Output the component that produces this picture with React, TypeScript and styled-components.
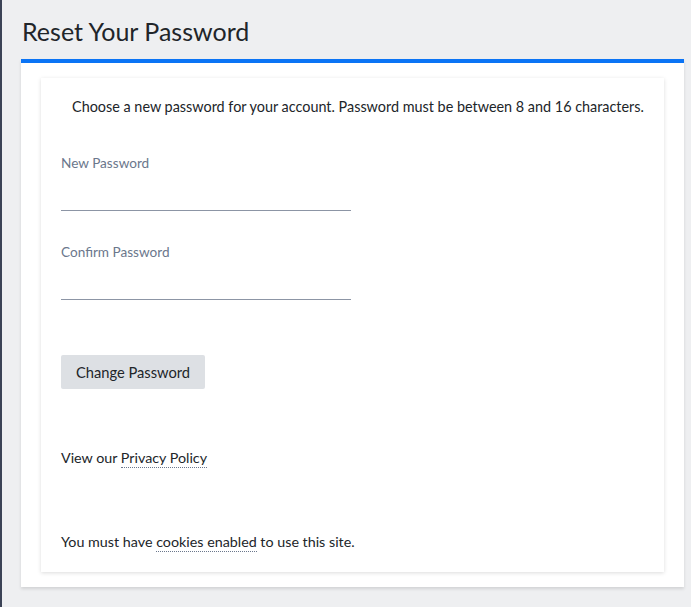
import styled, { createGlobalStyle } from 'styled-components';

const GlobalStyle = createGlobalStyle`
  body {
    margin: 0;
    background: #eeeff1;
    font-family: Lato, "Noto Sans", Arial, sans-serif;
    color: #212529;
  }
`;

const Page = styled.div`
  min-height: 100vh;
  box-sizing: border-box;
  border-left: 2px solid #3b4356;
  padding: 0 7px 20px 19px;
`;

const Title = styled.h1`
  margin: 0;
  padding: 16px 0 0 1px;
  height: 43px;
  font-size: 25px;
  line-height: 30px;
  font-weight: 400;
  color: #212529;
`;

const Panel = styled.section`
  background: #fff;
  border-top: 4px solid #0b74f5;
  padding: 15px 20px;
  box-shadow: 0 2px 3px rgba(0, 0, 0, 0.12);
`;

const Card = styled.div`
  background: #fff;
  padding: 19px 20px 20px;
  box-shadow: 0 1px 4px rgba(0, 0, 0, 0.14);
`;

const Intro = styled.p`
  margin: 0 -20px 0 -9px;
  font-size: 14.4px;
  line-height: 20px;
  text-align: center;
  white-space: nowrap;
`;

const Field = styled.div<{ $gap: number }>`
  margin-top: ${(p) => p.$gap}px;
  width: 290px;
`;

const Label = styled.label`
  display: block;
  font-size: 13.6px;
  line-height: 20px;
  color: #6b778c;
`;

const Input = styled.input`
  display: block;
  width: 100%;
  height: 38px;
  box-sizing: border-box;
  border: none;
  border-bottom: 1px solid #8c95a5;
  background: transparent;
  outline: none;
  font-size: 14px;
`;

const Button = styled.button`
  margin-top: 55px;
  width: 144px;
  height: 34px;
  border: none;
  border-radius: 2px;
  background: #dde0e4;
  color: #212529;
  font-family: inherit;
  font-size: 14.7px;
  cursor: pointer;
`;

const Note = styled.p<{ $gap: number }>`
  margin: ${(p) => p.$gap}px 0 0;
  font-size: 14.3px;
  line-height: 20px;
`;

const DotLink = styled.a`
  color: inherit;
  text-decoration: none;
  border-bottom: 1px dotted #6b778c;
  padding-bottom: 1px;
`;

export default function App() {
  return (
    <Page>
      <GlobalStyle />
      <Title>Reset Your Password</Title>
      <Panel>
        <Card>
          <Intro>
            Choose a new password for your account. Password must be between 8 and 16 characters.
          </Intro>
          <Field $gap={36}>
            <Label>New Password</Label>
            <Input type="password" />
          </Field>
          <Field $gap={31}>
            <Label>Confirm Password</Label>
            <Input type="password" />
          </Field>
          <Button>Change Password</Button>
          <Note $gap={59}>
            View our <DotLink href="#">Privacy Policy</DotLink>
          </Note>
          <Note $gap={64}>
            You must have <DotLink href="#">cookies enabled</DotLink> to use this site.
          </Note>
        </Card>
      </Panel>
    </Page>
  );
}
